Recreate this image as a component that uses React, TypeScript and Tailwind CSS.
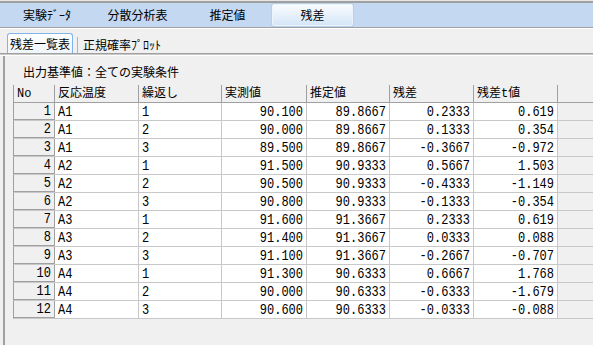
import React from 'react';

interface Row {
  no: number;
  temp: string;
  rep: string;
  measured: string;
  estimated: string;
  resid: string;
  t: string;
}

const ROWS: Row[] = [
  { no: 1, temp: 'A1', rep: '1', measured: '90.100', estimated: '89.8667', resid: '0.2333', t: '0.619' },
  { no: 2, temp: 'A1', rep: '2', measured: '90.000', estimated: '89.8667', resid: '0.1333', t: '0.354' },
  { no: 3, temp: 'A1', rep: '3', measured: '89.500', estimated: '89.8667', resid: '-0.3667', t: '-0.972' },
  { no: 4, temp: 'A2', rep: '1', measured: '91.500', estimated: '90.9333', resid: '0.5667', t: '1.503' },
  { no: 5, temp: 'A2', rep: '2', measured: '90.500', estimated: '90.9333', resid: '-0.4333', t: '-1.149' },
  { no: 6, temp: 'A2', rep: '3', measured: '90.800', estimated: '90.9333', resid: '-0.1333', t: '-0.354' },
  { no: 7, temp: 'A3', rep: '1', measured: '91.600', estimated: '91.3667', resid: '0.2333', t: '0.619' },
  { no: 8, temp: 'A3', rep: '2', measured: '91.400', estimated: '91.3667', resid: '0.0333', t: '0.088' },
  { no: 9, temp: 'A3', rep: '3', measured: '91.100', estimated: '91.3667', resid: '-0.2667', t: '-0.707' },
  { no: 10, temp: 'A4', rep: '1', measured: '91.300', estimated: '90.6333', resid: '0.6667', t: '1.768' },
  { no: 11, temp: 'A4', rep: '2', measured: '90.000', estimated: '90.6333', resid: '-0.6333', t: '-1.679' },
  { no: 12, temp: 'A4', rep: '3', measured: '90.600', estimated: '90.6333', resid: '-0.0333', t: '-0.088' },
];

const HEADERS = ['No', '反応温度', '繰返し', '実測値', '推定値', '残差', '残差t値'];
const WIDTHS = ['w-[41px]', 'w-[84px]', 'w-[83px]', 'w-[85px]', 'w-[83px]', 'w-[84px]', 'w-[84px]'];

const jp = { fontFamily: '"Noto Sans CJK JP", sans-serif' };
const grid = { fontFamily: '"Liberation Mono", "Noto Sans CJK JP", monospace' };

// the original grid font is a tall, narrow bitmap face — stretch mono a bit vertically
function Tall({ children }: { children: React.ReactNode }) {
  return <span className="inline-block scale-y-[1.18]">{children}</span>;
}

function Cell({ w, right, children }: { w: string; right?: boolean; children: React.ReactNode }) {
  return (
    <div
      className={`${w} shrink-0 h-full bg-white border-r border-[#c8c8c8] flex items-center px-[3px] ${
        right ? 'justify-end' : 'justify-start'
      }`}
    >
      <Tall>{children}</Tall>
    </div>
  );
}

export default function App() {
  return (
    <div className="w-[593px] h-[345px] bg-[#f0f0f0] overflow-hidden text-[12px] text-black leading-none" style={jp}>
      {/* top tab strip */}
      <div className="h-[1px] bg-[#e6e6e6]" />
      <div className="h-[2px] bg-[#a0a0a0]" />
      <div className="h-[24px] bg-[#c4d9f1] flex pl-[2px]">
        <div className="w-[90px] flex items-center justify-center">実験ﾃﾞｰﾀ</div>
        <div className="w-[91px] flex items-center justify-center">分散分析表</div>
        <div className="w-[89px] flex items-center justify-center">推定値</div>
        <div className="w-[81px] my-[1px] flex items-center justify-center rounded-[2px] border border-[#eef4fb] bg-gradient-to-b from-[#f8fbfe] to-[#d6e6f7] shadow-[0_0_0_1px_#b8cfe8]">
          残差
        </div>
      </div>
      <div className="h-[1px] bg-[#a0a0a0]" />
      <div className="h-[1px] bg-white" />

      {/* sub tabs */}
      <div className="h-[24px] flex items-end">
        <div className="ml-[7px] w-[66px] h-[20px] flex items-center justify-center rounded-t-[3px] border border-b-0 border-[#7eb4ea] bg-gradient-to-b from-white to-[#eef5fc]">
          残差一覧表
        </div>
        <div className="ml-[4px] h-[16px] pl-[5px] pr-[4px] flex items-center border-l border-[#b4b4b4]">
          正規確率ﾌﾟﾛｯﾄ
        </div>
      </div>
      <div className="h-[1px] bg-[#a0a0a0]" />
      <div className="h-[1px] bg-[#c8c8c8]" />
      <div className="h-[1px] bg-white" />

      {/* panel */}
      <div className="ml-[3px] h-full border-l-2 border-[#a0a0a0]">
        <div className="pl-[18px] pt-[10px] h-[29px]">出力基準値：全ての実験条件</div>

        <div className="ml-[8px] text-[12px]" style={grid}>
          <div className="flex h-[18px] border-l border-[#a0a0a0] border-b border-b-[#a0a0a0]">
            {HEADERS.map((h, i) => (
              <div
                key={h}
                className={`${WIDTHS[i]} shrink-0 h-full border-r border-[#a0a0a0] flex items-center px-[3px]`}
              >
                {h}
              </div>
            ))}
          </div>
          {ROWS.map((r) => (
            <div key={r.no} className="flex h-[18px] border-l border-[#a0a0a0] border-b border-b-[#c8c8c8]">
              <div className="w-[41px] shrink-0 h-full bg-[#f0f0f0] border-r border-b border-[#a0a0a0] -mb-px flex items-center justify-end px-[3px]">
                <Tall>{r.no}</Tall>
              </div>
              <Cell w="w-[84px]">{r.temp}</Cell>
              <Cell w="w-[83px]">{r.rep}</Cell>
              <Cell w="w-[85px]" right>{r.measured}</Cell>
              <Cell w="w-[83px]" right>{r.estimated}</Cell>
              <Cell w="w-[84px]" right>{r.resid}</Cell>
              <Cell w="w-[84px]" right>{r.t}</Cell>
            </div>
          ))}
        </div>
      </div>
    </div>
  );
}
